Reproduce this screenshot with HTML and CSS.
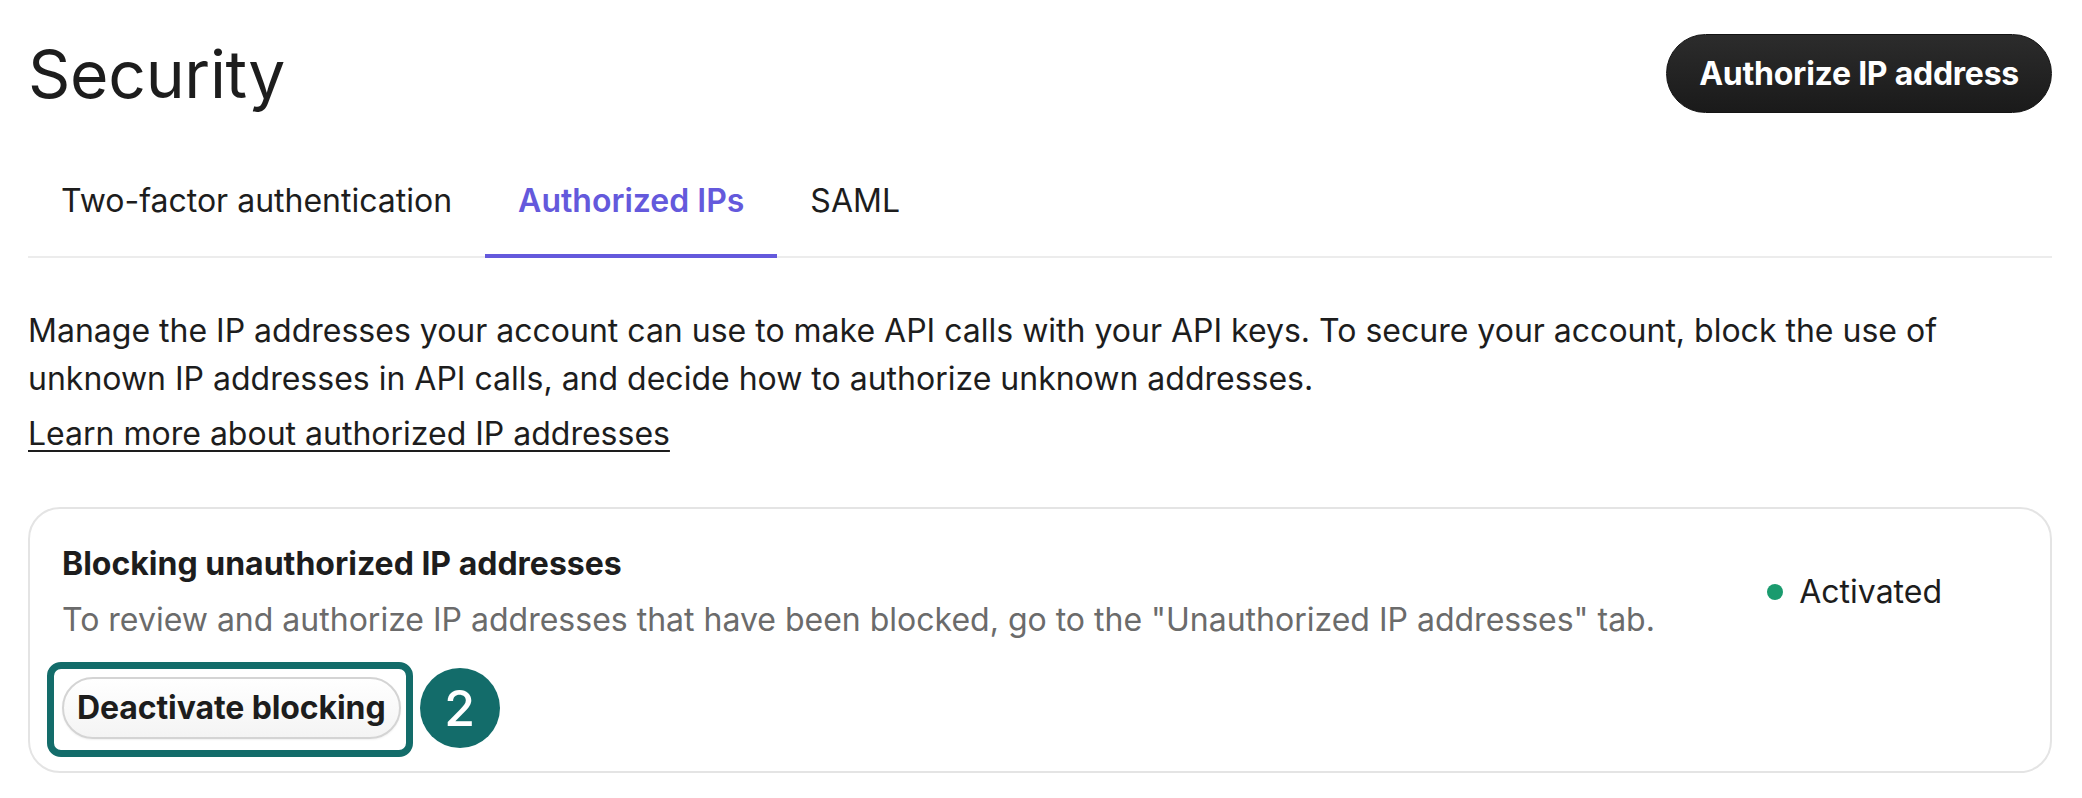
FILE: index.html
```html
<!DOCTYPE html>
<html lang="en">
<head>
<meta charset="utf-8">
<title>Security</title>
<link rel="stylesheet" href="styles.css">
</head>
<body>
<div class="page">
  <header class="header">
    <h1 class="title">Security</h1>
    <button class="btn-primary">Authorize IP address</button>
  </header>
  <nav class="tabs">
    <a class="tab">Two-factor authentication</a>
    <a class="tab active">Authorized IPs</a>
    <a class="tab">SAML</a>
  </nav>
  <div class="intro">
    <p class="intro-text">Manage the IP addresses your account can use to make API calls with your API keys. To secure your account, block the use of unknown IP addresses in API calls, and decide how to authorize unknown addresses.</p>
    <a class="link" href="#">Learn more about authorized IP addresses</a>
  </div>
  <section class="card">
    <div class="card-top">
      <div class="card-text">
        <h2 class="card-title">Blocking unauthorized IP addresses</h2>
        <p class="card-desc">To review and authorize IP addresses that have been blocked, go to the "Unauthorized IP addresses" tab.</p>
      </div>
      <div class="status"><span class="dot"></span>Activated</div>
    </div>
    <div class="card-actions">
      <span class="highlight"><button class="btn-secondary">Deactivate blocking</button></span>
      <span class="badge">2</span>
    </div>
  </section>
</div>
</body>
</html>
```

FILE: styles.css
```css
* { box-sizing: border-box; }
html, body { margin: 0; background: #ffffff; }
body {
  font-family: Inter, "Noto Sans", "Liberation Sans", sans-serif;
  color: #1d1d1d;
}
.page {
  padding: 34px 30px 0 28px;
}
.header {
  display: flex;
  justify-content: space-between;
  align-items: center;
  height: 79px;
}
.title {
  margin: 0;
  font-size: 66px;
  line-height: 1;
  font-weight: 400;
  letter-spacing: -0.3px;
}
.btn-primary {
  height: 79px;
  padding: 0 32px;
  border-radius: 40px;
  border: 1px solid #141414;
  background: linear-gradient(#2c2c2c, #1a1a1a);
  color: #ffffff;
  font-family: inherit;
  font-size: 32px;
  font-weight: 700;
  letter-spacing: -0.25px;
  line-height: 1;
}
.tabs {
  margin-top: 31px;
  display: flex;
  border-bottom: 2px solid #ececec;
}
.tab {
  padding: 41px 33px 37px;
  font-size: 32px;
  line-height: 32px;
  border-bottom: 4px solid transparent;
  margin-bottom: -2px;
  color: #1d1d1d;
}
.tab.active {
  color: #6459dc;
  font-weight: 600;
  border-bottom-color: #6459dc;
}
.intro {
  margin-top: 49px;
  font-size: 32px;
  line-height: 48px;
}
.intro-text { margin: 0; }
.link {
  display: inline-block;
  margin-top: 7px;
  color: #1d1d1d;
  text-decoration: underline;
  text-decoration-thickness: 2px;
  text-underline-offset: 5px;
}
.card {
  margin-top: 49px;
  border: 2px solid #e4e4e4;
  border-radius: 32px;
  padding: 31px 32px 32px 32px;
}
.card-top {
  display: flex;
  justify-content: space-between;
  align-items: center;
}
.card-title {
  margin: 0;
  font-size: 32px;
  line-height: 48px;
  font-weight: 700;
}
.card-desc {
  margin: 8px 0 0;
  font-size: 32px;
  line-height: 48px;
  color: #6b6b6b;
}
.status {
  display: flex;
  align-items: center;
  gap: 16px;
  margin-right: 76px;
  font-size: 32px;
  line-height: 48px;
}
.dot {
  width: 16px;
  height: 16px;
  border-radius: 50%;
  background: #1a9b6e;
}
.card-actions {
  margin-top: 33px;
  display: flex;
  align-items: center;
}
.highlight {
  display: inline-flex;
  border: 7px solid #136c6a;
  border-radius: 14px;
  padding: 8px 5px 11px 8px;
  margin: -15px -12px -18px -15px;
}
.btn-secondary {
  height: 62px;
  padding: 0 13px;
  border: 2px solid #d4d4d4;
  border-radius: 31px;
  background: linear-gradient(#ffffff, #f4f4f4);
  box-shadow: 0 1px 2px rgba(0,0,0,0.06);
  color: #1d1d1d;
  font-family: inherit;
  font-size: 32px;
  font-weight: 700;
  letter-spacing: -0.1px;
  line-height: 1;
}
.badge {
  width: 80px;
  height: 80px;
  margin: -9px 0 -9px 19px;
  border-radius: 50%;
  background: #136c6a;
  color: #ffffff;
  display: flex;
  align-items: center;
  justify-content: center;
  font-size: 50px;
  font-weight: 500;
  line-height: 1;
}
```
